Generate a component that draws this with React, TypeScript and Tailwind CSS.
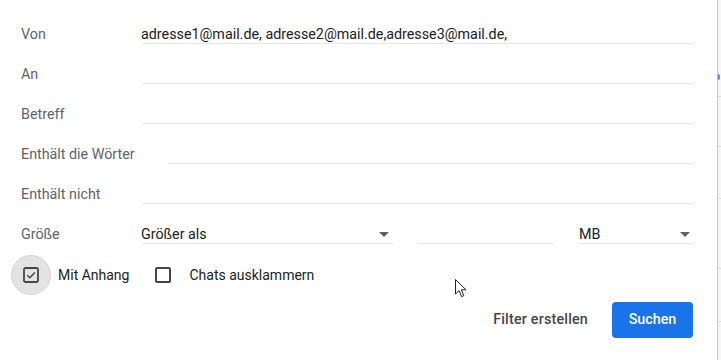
import React from "react";

function Arrow() {
  return (
    <svg width="10" height="5" viewBox="0 0 10 5" className="shrink-0">
      <path d="M0 0 L10 0 L5 5 Z" fill="#5f6368" />
    </svg>
  );
}

function Row({ label, labelW = 120, value }: { label: string; labelW?: number; value?: string }) {
  return (
    <div className="flex h-10 items-end">
      <div
        className="shrink-0 pb-[1px] text-[14.3px] leading-[18px] text-[#5f6368]"
        style={{ width: labelW }}
      >
        {label}
      </div>
      <div className="flex-1 h-10 flex items-end border-b border-[#e8e8e8] text-[14.3px] leading-[18px] text-[#202124]">
        {value}
      </div>
    </div>
  );
}

export default function App() {
  return (
    <div className="relative flex w-[721px] h-[360px] bg-white overflow-hidden" style={{ fontFamily: "Roboto, 'Liberation Sans', Arial, sans-serif" }}>
      <div className="w-[717px] h-full pl-[21px] pr-[25px] pt-[4px] flex flex-col">
        <Row label="Von" value="adresse1@mail.de, adresse2@mail.de,adresse3@mail.de," />
        <Row label="An" />
        <Row label="Betreff" />
        <Row label="Enthält die Wörter" labelW={147} />
        <Row label="Enthält nicht" />
        <div className="flex h-10 items-end">
          <div className="w-[120px] shrink-0 pb-[1px] text-[14.3px] leading-[18px] text-[#5f6368]">Größe</div>
          <div className="w-[252px] h-10 flex items-end justify-between border-b border-[#e8e8e8] pr-[4px] text-[14.3px] leading-[18px] text-[#202124]">
            <span>Größer als</span>
            <span className="mb-[6px]"><Arrow /></span>
          </div>
          <div className="ml-[24px] w-[138px] h-10 border-b border-[#e8e8e8]" />
          <div className="ml-[24px] flex-1 h-10 flex items-end justify-between border-b border-[#e8e8e8] pr-[2px] text-[14.3px] leading-[18px] text-[#202124]">
            <span>MB</span>
            <span className="mb-[6px]"><Arrow /></span>
          </div>
        </div>
        <div className="flex items-center mt-[11px] -ml-[10px] h-10">
          <div className="w-10 h-10 rounded-full bg-[#e3e3e3] border border-[#d6d6d6] flex items-center justify-center shrink-0">
            <svg width="16" height="16" viewBox="0 0 16 16">
              <rect x="1" y="1" width="14" height="14" rx="1.5" fill="none" stroke="#444746" strokeWidth="1.8" />
              <path d="M4.3 8.2 L6.9 10.7 L11.8 5.6" fill="none" stroke="#444746" strokeWidth="1.5" />
            </svg>
          </div>
          <span className="ml-[7px] text-[14px] leading-5 text-[#202124]">Mit Anhang</span>
          <div className="ml-[26px] w-4 h-4 rounded-[2px] border-[2px] border-[#444746] shrink-0" />
          <span className="ml-[18px] text-[14px] leading-5 text-[#202124]">Chats ausklammern</span>
        </div>
        <div className="flex items-center justify-end mt-[7px] h-9 -mr-[1px]">
          <span className="text-[14.3px] font-medium text-[#444746] tracking-[0.2px]">Filter erstellen</span>
          <button className="ml-[24px] w-[81px] h-9 rounded-[4px] bg-[#1a73e8] text-white text-[14.3px] font-medium">
            Suchen
          </button>
        </div>
      </div>
      <div className="w-[4px] h-full border-l border-[#c4c4c4] bg-[#f6f6f6] flex flex-col">
        <div className="h-[97px] border-b border-[#dedede] relative">
          <div className="absolute left-0 top-[74px] w-[2px] h-[6px] rounded-r bg-[#5b8fd6]" />
        </div>
        <div className="h-[50px] border-b border-[#dedede]" />
        <div className="h-[52px] border-b border-[#dedede]" />
        <div className="h-[70px] border-b border-[#dedede]" />
        <div className="h-[53px] border-b border-[#dedede]" />
      </div>
      <svg className="absolute left-[455px] top-[279px]" width="13" height="20" viewBox="0 0 13 20">
        <path d="M0.5 0.5 L0.5 15 L4 11.6 L6.6 17.6 L8.8 16.7 L6.3 10.8 L11 10.8 Z" fill="white" stroke="#222" strokeWidth="1" strokeLinejoin="round" />
      </svg>
    </div>
  );
}
